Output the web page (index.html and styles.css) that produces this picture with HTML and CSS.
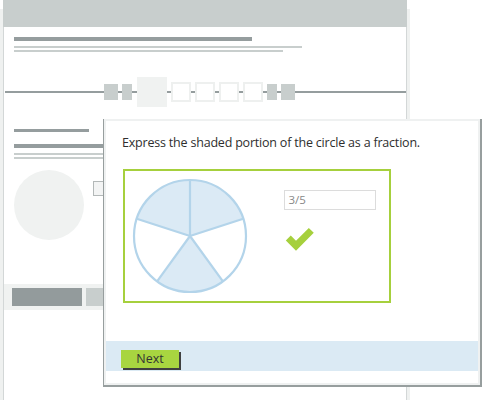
FILE: index.html
```html
<!DOCTYPE html>
<html lang="en">
<head>
    <meta charset="UTF-8">
    <title>Fraction Practice</title>
    <link rel="stylesheet" href="styles.css">
</head>
<body>
    <div class="desk">
        <div class="page">
            <div class="page-header"></div>
            <div class="intro">
                <div class="bar bar-dark intro-title"></div>
                <div class="bar bar-light intro-line1"></div>
                <div class="bar bar-light intro-line2"></div>
            </div>
            <div class="steps">
                <span class="step step-wide"></span>
                <span class="step"></span>
                <span class="step-current"></span>
                <span class="step-empty"></span>
                <span class="step-empty"></span>
                <span class="step-empty"></span>
                <span class="step-empty"></span>
                <span class="step"></span>
                <span class="step step-wide"></span>
            </div>
            <div class="lesson">
                <div class="bar bar-dark lesson-title"></div>
                <div class="bar bar-dark lesson-sub"></div>
                <div class="bar bar-light lesson-line1"></div>
                <div class="bar bar-light lesson-line2"></div>
                <div class="lesson-body">
                    <div class="lesson-circle"></div>
                    <div class="lesson-box"></div>
                </div>
            </div>
            <div class="page-toolbar">
                <span class="tool tool-dark"></span>
                <span class="tool tool-light"></span>
            </div>
        </div>
    </div>

    <div class="modal">
        <div class="modal-inner">
            <p class="question">Express the shaded portion of the circle as a fraction.</p>
            <div class="answer-box">
                <svg class="pie" width="120" height="120" viewBox="0 0 120 120">
                    <g fill="#dbeaf5" stroke="none">
                        <path d="M60 60 L6.74 42.7 A56 56 0 0 1 60 4 Z"/>
                        <path d="M60 60 L60 4 A56 56 0 0 1 113.26 42.7 Z"/>
                        <path d="M60 60 L92.92 105.31 A56 56 0 0 1 27.08 105.31 Z"/>
                    </g>
                    <g fill="none" stroke="#b3d4ea" stroke-width="2.2">
                        <circle cx="60" cy="60" r="56"/>
                        <path d="M60 60 L60 4 M60 60 L113.26 42.7 M60 60 L92.92 105.31 M60 60 L27.08 105.31 M60 60 L6.74 42.7"/>
                    </g>
                </svg>
                <div class="answer">
                    <div class="answer-input">3/5</div>
                    <svg class="check" width="32" height="26" viewBox="0 0 32 26">
                        <polyline points="4.3,12 12,19.7 27.3,4.4" fill="none" stroke="#a6d03d" stroke-width="7"/>
                    </svg>
                </div>
            </div>
            <div class="modal-footer">
                <button class="btn-next">Next</button>
            </div>
        </div>
    </div>
</body>
</html>
```

FILE: styles.css
```css
* {
    box-sizing: border-box;
    margin: 0;
    padding: 0;
}
html, body {
    width: 490px;
    height: 400px;
    overflow: hidden;
}
body {
    position: relative;
    background-color: #fff;
    font-family: 'Open Sans', 'Liberation Sans', sans-serif;
    color: #333;
}
.desk {
    width: 410px;
    padding: 0 3px;
    background: linear-gradient(to bottom, transparent 9px, #eff1f0 9px);
}
.page {
    width: 404px;
    min-height: 420px;
    background-color: white;
    border-left: 1px solid #d3d7d7;
    border-right: 1px solid #d3d7d7;
}
.page-header {
    height: 27px;
    margin: 0 -1px;
    background-color: #c8cecd;
}
.bar {
    display: block;
}
.bar-dark {
    background-color: #959d9e;
}
.bar-light {
    background-color: #c8cecd;
    height: 2px;
}
.intro {
    padding-left: 10px;
}
.intro-title {
    margin-top: 10px;
    height: 4px;
    width: 238px;
}
.intro-line1 {
    margin-top: 5px;
    width: 288px;
}
.intro-line2 {
    margin-top: 2px;
    width: 269px;
}
.steps {
    margin: 25px 0 0 1px;
    height: 30px;
    padding-left: 99px;
    display: flex;
    align-items: center;
    gap: 4px;
    background: linear-gradient(#959d9e, #959d9e) center / 100% 2px no-repeat;
}
.step {
    width: 10px;
    height: 16px;
    background-color: #c8cecd;
}
.step-wide {
    width: 14px;
}
.step-current {
    width: 30px;
    height: 30px;
    margin-left: 1px;
    background-color: #f0f2f1;
}
.step-empty {
    width: 20px;
    height: 20px;
    background-color: white;
    border: 2px solid #eef0ef;
}
.lesson {
    padding-left: 10px;
}
.lesson-title {
    margin-top: 22px;
    height: 3px;
    width: 75px;
}
.lesson-sub {
    margin-top: 12px;
    height: 4px;
    width: 200px;
}
.lesson-line1 {
    margin-top: 5px;
    width: 200px;
}
.lesson-line2 {
    margin-top: 2px;
    width: 200px;
}
.lesson-body {
    display: flex;
    align-items: flex-start;
    margin-top: 11px;
}
.lesson-circle {
    width: 70px;
    height: 70px;
    border-radius: 50%;
    background-color: #f0f2f1;
}
.lesson-box {
    width: 16px;
    height: 15px;
    margin: 11px 0 0 9px;
    background-color: #f3f4f4;
    border: 1px solid #b3b8b8;
}
.page-toolbar {
    margin-top: 44px;
    height: 26px;
    padding: 4px 8px;
    display: flex;
    gap: 4px;
    background-color: #f0f2f1;
}
.tool {
    width: 70px;
    height: 18px;
}
.tool-dark {
    background-color: #939b9c;
}
.tool-light {
    background-color: #c8cecd;
}
.modal {
    position: absolute;
    left: 103px;
    top: 119px;
    width: 379px;
    height: 268px;
    background-color: #eff1f1;
    border-left: 1px solid #979e9e;
    border-right: 2px solid #979e9e;
    border-bottom: 2px solid #979e9e;
}
.modal-inner {
    height: 100%;
    background-color: white;
    border: 2px solid #eff1f1;
    display: flex;
    flex-direction: column;
}
.question {
    margin: 13px 0 0 16px;
    font-size: 12.5px;
    letter-spacing: -0.2px;
    line-height: 18px;
    color: #2e2e2e;
}
.answer-box {
    width: 268px;
    height: 134px;
    margin: 17px 0 0 17px;
    padding: 5px 4px;
    border: 2px solid #a6d03d;
    display: flex;
    align-items: flex-start;
}
.pie {
    margin-left: 0.5px;
}
.answer {
    margin-left: 34px;
    padding-top: 14px;
    display: flex;
    flex-direction: column;
}
.answer-input {
    width: 92px;
    height: 20px;
    padding-left: 4px;
    border: 1px solid #dcdcdc;
    font-size: 11.5px;
    line-height: 18px;
    color: #888;
}
.check {
    margin-top: 16px;
}
.modal-footer {
    margin-top: 38px;
    height: 30px;
    padding: 5px 15px;
    background-color: #dbeaf4;
}
.btn-next {
    width: 58px;
    height: 18px;
    border: none;
    background-color: #a8d540;
    box-shadow: 2px 2px 0 #3f4040;
    font-family: 'Open Sans', 'Liberation Sans', sans-serif;
    font-size: 12.5px;
    line-height: 18px;
    color: #333;
    cursor: pointer;
}
```
